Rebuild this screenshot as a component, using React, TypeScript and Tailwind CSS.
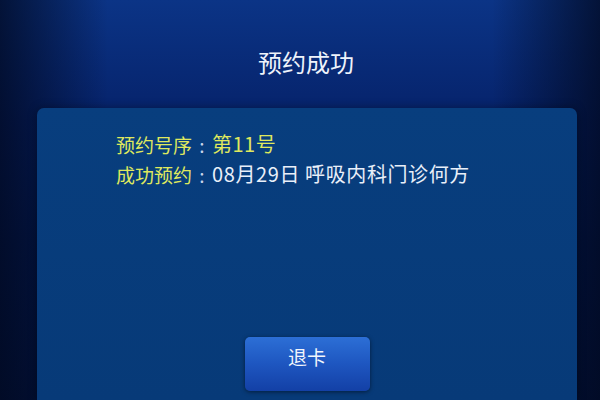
export default function App() {
  return (
    <div
      className="relative flex h-[400px] w-[600px] flex-col overflow-hidden bg-[linear-gradient(180deg,#0b3486_0%,#06226a_30%,#041a52_60%,#031440_100%)]"
      style={{ fontFamily: '"Noto Sans CJK SC", "Noto Sans", sans-serif' }}
    >
      {/* darker edges */}
      <div className="pointer-events-none absolute inset-0 bg-[linear-gradient(90deg,rgba(1,8,30,0.75)_0%,rgba(1,8,30,0)_18%,rgba(1,8,30,0)_82%,rgba(1,8,30,0.75)_100%)]" />

      <div className="relative flex h-[108px] shrink-0 items-center justify-center pl-[12px] pt-[16px]">
        <h1 className="text-[24px] leading-none text-[#eef3fb]">预约成功</h1>
      </div>

      <div className="relative ml-[37px] mr-[23px] flex flex-1 flex-col rounded-t-[7px] bg-[linear-gradient(180deg,#083e7e_0%,#073a78_100%)] pl-[79px] pt-[21px] shadow-[0_0_10px_rgba(0,0,0,0.35)]">
        <div className="flex h-[30px] items-center text-[19px] leading-none">
          <span className="text-[#dfe85e]">预约号序</span>
          <span className="w-[20px] text-center text-[#c9d6ea]">:</span>
          <span className="text-[20px] tracking-[0.5px] text-[#dfe85e]">第11号</span>
        </div>
        <div className="flex h-[30px] items-center text-[19px] leading-none">
          <span className="text-[#dfe85e]">成功预约</span>
          <span className="w-[20px] text-center text-[#c9d6ea]">:</span>
          <span className="text-[20px] tracking-[0.6px] text-[#e9eff9]">08月29日 呼吸内科门诊何方</span>
        </div>

        <div className="-ml-[79px] mt-[148px] flex justify-center">
          <button className="flex h-[54px] w-[125px] justify-center rounded-[5px] bg-[linear-gradient(180deg,#2c6fd6_0%,#1e56c0_50%,#1340a6_100%)] pt-[8px] text-[19px] leading-[24px] text-[#f2f6fc] shadow-[0_1px_4px_rgba(0,0,0,0.5)]">
            退卡
          </button>
        </div>
      </div>
    </div>
  )
}
